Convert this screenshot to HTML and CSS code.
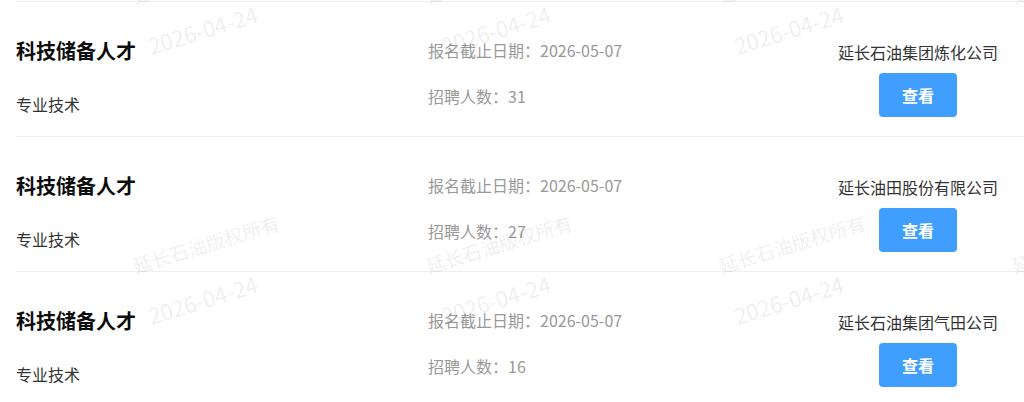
FILE: index.html
```html
<!DOCTYPE html>
<html lang="zh-CN">
<head>
<meta charset="utf-8">
<title>招聘列表</title>
<link rel="stylesheet" href="styles.css">
</head>
<body>
<div class="page">
  <ul class="list">
    <li class="item">
      <div class="col-main">
        <div class="title">科技储备人才</div>
        <div class="cat">专业技术</div>
      </div>
      <div class="col-info">
        <div class="info">报名截止日期：2026-05-07</div>
        <div class="info">招聘人数：31</div>
      </div>
      <div class="col-org">
        <div class="org">延长石油集团炼化公司</div>
        <button class="btn" type="button">查看</button>
      </div>
    </li>
    <li class="item">
      <div class="col-main">
        <div class="title">科技储备人才</div>
        <div class="cat">专业技术</div>
      </div>
      <div class="col-info">
        <div class="info">报名截止日期：2026-05-07</div>
        <div class="info">招聘人数：27</div>
      </div>
      <div class="col-org">
        <div class="org">延长油田股份有限公司</div>
        <button class="btn" type="button">查看</button>
      </div>
    </li>
    <li class="item">
      <div class="col-main">
        <div class="title">科技储备人才</div>
        <div class="cat">专业技术</div>
      </div>
      <div class="col-info">
        <div class="info">报名截止日期：2026-05-07</div>
        <div class="info">招聘人数：16</div>
      </div>
      <div class="col-org">
        <div class="org">延长石油集团气田公司</div>
        <button class="btn" type="button">查看</button>
      </div>
    </li>
  </ul>
  <div class="watermark" aria-hidden="true">
    <div class="tile"><span class="wm-text">延长石油版权所有</span><span class="wm-date">2026-04-24</span></div>
    <div class="tile"><span class="wm-text">延长石油版权所有</span><span class="wm-date">2026-04-24</span></div>
    <div class="tile"><span class="wm-text">延长石油版权所有</span><span class="wm-date">2026-04-24</span></div>
    <div class="tile"><span class="wm-text">延长石油版权所有</span><span class="wm-date">2026-04-24</span></div>
    <div class="tile"><span class="wm-text">延长石油版权所有</span><span class="wm-date">2026-04-24</span></div>
    <div class="tile"><span class="wm-text">延长石油版权所有</span><span class="wm-date">2026-04-24</span></div>
    <div class="tile"><span class="wm-text">延长石油版权所有</span><span class="wm-date">2026-04-24</span></div>
    <div class="tile"><span class="wm-text">延长石油版权所有</span><span class="wm-date">2026-04-24</span></div>
    <div class="tile"><span class="wm-text">延长石油版权所有</span><span class="wm-date">2026-04-24</span></div>
    <div class="tile"><span class="wm-text">延长石油版权所有</span><span class="wm-date">2026-04-24</span></div>
    <div class="tile"><span class="wm-text">延长石油版权所有</span><span class="wm-date">2026-04-24</span></div>
    <div class="tile"><span class="wm-text">延长石油版权所有</span><span class="wm-date">2026-04-24</span></div>
  </div>
</div>
</body>
</html>
```
FILE: styles.css
```css
html, body {
  margin: 0;
  padding: 0;
  background: #ffffff;
  overflow: hidden;
}

body {
  font-family: "Noto Sans CJK SC", "Noto Sans", sans-serif;
  color: #333333;
}

.page {
  position: relative;
  width: 1024px;
  height: 402px;
  overflow: hidden;
}

.list {
  list-style: none;
  margin: 0;
  padding: 1px 0 0 16px;
}

.item {
  display: grid;
  grid-template-columns: 412px 1fr 160px;
  box-sizing: border-box;
  height: 135px;
  padding: 35px 26px 0 0;
  border-top: 1px solid #ebeef5;
}

.col-main {
  display: flex;
  flex-direction: column;
  gap: 27px;
}

.title {
  font-size: 20px;
  line-height: 28px;
  font-weight: 700;
  color: #0d0d0d;
}

.cat {
  font-size: 16px;
  line-height: 24px;
  color: #333333;
}

.col-info {
  display: flex;
  flex-direction: column;
  gap: 22px;
  padding-top: 1px;
}

.info {
  font-size: 16px;
  line-height: 24px;
  color: #999999;
}

.col-org {
  display: flex;
  flex-direction: column;
  align-items: center;
  gap: 9px;
  padding-top: 3px;
}

.org {
  font-size: 16px;
  line-height: 24px;
  color: #333333;
  white-space: nowrap;
}

.btn {
  width: 78px;
  height: 44px;
  border: none;
  border-radius: 4px;
  background: #409eff;
  color: #ffffff;
  font-family: "Noto Sans CJK SC", sans-serif;
  font-size: 16px;
  font-weight: 700;
  padding: 0;
}

.watermark {
  position: absolute;
  top: -126px;
  left: 60px;
  display: grid;
  grid-template-columns: repeat(4, 293px);
  grid-auto-rows: 270px;
  pointer-events: none;
}

.tile {
  display: flex;
  flex-direction: column;
  align-items: center;
  padding-top: 88px;
  gap: 31px;
}

.wm-text,
.wm-date {
  display: block;
  font-size: 19px;
  line-height: 24px;
  color: rgba(0, 0, 0, 0.085);
  white-space: nowrap;
  transform: rotate(-17deg);
}

.wm-date {
  font-size: 22px;
  margin-left: -8px;
}
```
